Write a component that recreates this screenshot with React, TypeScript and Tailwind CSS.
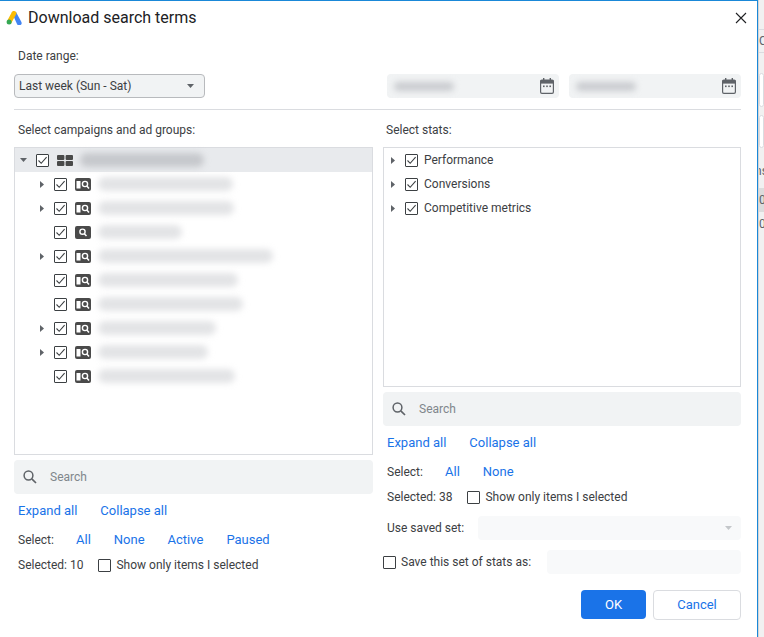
import React from "react";

const Check = ({ checked = true }: { checked?: boolean }) => (
  <span className="w-[13px] h-[13px] border border-[#3c4043] rounded-[1px] bg-white flex items-center justify-center shrink-0">
    {checked && (
      <svg width="11" height="11" viewBox="0 0 11 11" fill="none">
        <path d="M1.5 5.5 L4.2 8.3 L9.6 2.2" stroke="#3c4043" strokeWidth="1.1" />
      </svg>
    )}
  </span>
);

const Caret = ({ down = false }: { down?: boolean }) =>
  down ? (
    <svg width="7" height="4" viewBox="0 0 7 4"><path d="M0 0h7L3.5 4z" fill="#5f6368" /></svg>
  ) : (
    <svg width="4" height="7" viewBox="0 0 4 7"><path d="M0 0v7l4-3.5z" fill="#5f6368" /></svg>
  );

const CampaignIcon = () => (
  <svg width="16" height="13" viewBox="0 0 16 13">
    <rect width="16" height="13" rx="2" fill="#4a4a4a" />
    <rect x="1.5" y="3" width="4" height="7.5" fill="#fff" />
    <circle cx="10" cy="6" r="2.6" fill="none" stroke="#fff" strokeWidth="1.4" />
    <path d="M11.8 8 L14 10.4" stroke="#fff" strokeWidth="1.5" />
  </svg>
);

const SearchBadge = () => (
  <svg width="16" height="13" viewBox="0 0 16 13">
    <rect width="16" height="13" rx="2" fill="#4a4a4a" />
    <circle cx="7.5" cy="5.7" r="2.6" fill="none" stroke="#fff" strokeWidth="1.4" />
    <path d="M9.3 7.7 L11.5 10" stroke="#fff" strokeWidth="1.5" />
  </svg>
);

const Blur = ({ w, dark = false }: { w: number; dark?: boolean }) => (
  <span
    className={`h-[14px] rounded-full blur-[3px] ${dark ? "bg-[#c6c8cc]" : "bg-[#e3e4e6]"}`}
    style={{ width: w }}
  />
);

const SearchBar = () => (
  <div className="h-[34px] bg-[#f1f3f4] rounded-[4px] flex items-center pl-[8px]">
    <svg width="16" height="16" viewBox="0 0 16 16" fill="none">
      <circle cx="6.5" cy="6.5" r="4.4" stroke="#5f6368" strokeWidth="1.5" />
      <path d="M9.8 9.8 L14 14" stroke="#5f6368" strokeWidth="1.7" />
    </svg>
    <span className="ml-[12px] text-[12px] text-[#80868b]">Search</span>
  </div>
);

const CalendarIcon = () => (
  <svg width="14" height="16" viewBox="0 0 14 16">
    <rect x="0.6" y="2" width="12.8" height="13.4" rx="1.3" fill="none" stroke="#5f6368" strokeWidth="1.2" />
    <rect x="0.6" y="2" width="12.8" height="3.6" fill="#5f6368" />
    <rect x="3" y="0" width="1.4" height="3" fill="#5f6368" />
    <rect x="9.6" y="0" width="1.4" height="3" fill="#5f6368" />
    <rect x="3" y="7.5" width="1.6" height="1.6" fill="#5f6368" />
    <rect x="6.2" y="7.5" width="1.6" height="1.6" fill="#5f6368" />
    <rect x="9.4" y="7.5" width="1.6" height="1.6" fill="#5f6368" />
  </svg>
);

const DateField = ({ w, blur }: { w: number; blur: number }) => (
  <div className="h-[24px] bg-[#f1f3f4] rounded-[4px] flex items-center justify-between pl-[7px] pr-[5px]" style={{ width: w }}>
    <span className="h-[9px] rounded-full blur-[3px] bg-[#c9cbcf]" style={{ width: blur }} />
    <CalendarIcon />
  </div>
);

const rows = [
  { caret: true, icon: "c", w: 135 },
  { caret: true, icon: "c", w: 136 },
  { caret: false, icon: "s", w: 84 },
  { caret: true, icon: "c", w: 175 },
  { caret: false, icon: "c", w: 140 },
  { caret: false, icon: "c", w: 145 },
  { caret: true, icon: "c", w: 118 },
  { caret: true, icon: "c", w: 110 },
  { caret: false, icon: "c", w: 137 },
];

const Link = ({ children, className = "" }: { children: React.ReactNode; className?: string }) => (
  <span className={`text-[13px] text-[#1a73e8] ${className}`}>{children}</span>
);

const Backdrop = () => (
  <div className="w-[6px] h-full bg-[#f1f1f1] flex flex-col overflow-hidden text-[#5f6368] text-[12px] leading-[14px] border-l border-[#d5d5d5]">
    <span className="mt-[29px] h-[24px] border-y border-[#dadce0] whitespace-nowrap pt-[4px]">C</span>
    <span className="mt-[20px] h-[34px] border border-[#dadce0] rounded-[4px] bg-white" />
    <span className="mt-[8px] h-[33px] border border-[#dadce0] rounded-[4px] bg-white" />
    <span className="mt-[16px] h-[24px] whitespace-nowrap -ml-[4px]">ns</span>
    <span className="h-[24px] bg-[#dcdcdc] pt-[5px]">0</span>
    <span className="h-[24px] pt-[5px]">0</span>
  </div>
);

export default function App() {
  return (
    <div className="w-[764px] h-[637px] bg-white flex overflow-hidden font-['Roboto','Liberation_Sans',sans-serif] text-[12px] text-[#3c4043]">
      <div className="w-[758px] h-full shrink-0 border-t border-r border-[#1a88d8] bg-white flex flex-col">
        {/* Title */}
        <div className="flex items-center h-[32px] pl-[6px] pr-[8px] pt-[1px] shrink-0">
          <svg width="16" height="14" viewBox="0 0 16 14" className="shrink-0">
            <path d="M5.6 1 L10 1 L15.4 11 A2.4 2.4 0 0 1 11 13 Z" fill="#4285f4" />
            <path d="M5.8 1.2 A2.4 2.4 0 0 1 10 3.6 L5.2 12.2 L1.2 9.8 Z" fill="#fbbc04" />
            <circle cx="3.1" cy="11" r="2.5" fill="#34a853" />
          </svg>
          <span className="ml-[6px] text-[16px] text-[#202124]">Download search terms</span>
          <svg width="12" height="12" viewBox="0 0 12 12" className="ml-auto mr-[2px]">
            <path d="M1 1 L11 11 M11 1 L1 11" stroke="#202124" strokeWidth="1.1" />
          </svg>
        </div>

        {/* Date */}
        <div className="pl-[14px] pr-[16px] shrink-0">
          <div className="pl-[4px] mt-[16px] leading-[14px]">Date range:</div>
          <div className="flex items-center mt-[11px]">
            <div className="w-[191px] h-[24px] bg-[#f1f3f4] border border-[#b8babd] rounded-[4px] flex items-center justify-between pl-[4px] pr-[10px]">
              <span className="text-[12px]">Last week (Sun - Sat)</span>
              <Caret down />
            </div>
            <div className="ml-auto flex gap-[10px]">
              <DateField w={172} blur={60} />
              <DateField w={172} blur={60} />
            </div>
          </div>
          <div className="h-px bg-[#dadce0] mt-[11px]" />
        </div>

        {/* Columns */}
        <div className="flex pl-[14px] pr-[16px] flex-1">
          {/* Left */}
          <div className="w-[359px] shrink-0 flex flex-col">
            <div className="pl-[4px] mt-[13px] leading-[14px]">Select campaigns and ad groups:</div>
            <div className="mt-[10px] h-[308px] border border-[#dadce0] bg-white">
              <div className="h-[24px] bg-[#e8eaed] flex items-center pl-[5px]">
                <Caret down />
                <span className="ml-[9px] flex"><Check /></span>
                <span className="ml-[8px] flex">
                  <svg width="16" height="11" viewBox="0 0 16 11" fill="#4a4a4a">
                    <rect width="7.4" height="5" rx="1" />
                    <rect x="8.6" width="7.4" height="5" rx="1" />
                    <rect y="6" width="7.4" height="5" rx="1" />
                    <rect x="8.6" y="6" width="7.4" height="5" rx="1" />
                  </svg>
                </span>
                <span className="ml-[7px] flex"><Blur w={124} dark /></span>
              </div>
              {rows.map((r, i) => (
                <div key={i} className="h-[24px] flex items-center pl-[25px]">
                  <span className="w-[4px] flex">{r.caret && <Caret />}</span>
                  <span className="ml-[10px] flex"><Check /></span>
                  <span className="ml-[8px] flex">{r.icon === "c" ? <CampaignIcon /> : <SearchBadge />}</span>
                  <span className="ml-[7px] flex"><Blur w={r.w} /></span>
                </div>
              ))}
            </div>
            <div className="mt-[5px]"><SearchBar /></div>
            <div className="flex pl-[4px] mt-[9px] gap-[23px] leading-[16px]">
              <Link>Expand all</Link>
              <Link>Collapse all</Link>
            </div>
            <div className="flex items-center pl-[4px] mt-[13px] h-[16px]">
              <span className="w-[58px]">Select:</span>
              <div className="flex gap-[23px]">
                <Link>All</Link>
                <Link>None</Link>
                <Link>Active</Link>
                <Link>Paused</Link>
              </div>
            </div>
            <div className="flex items-center pl-[4px] mt-[9px] h-[16px]">
              <span>Selected: 10</span>
              <span className="ml-[15px] flex"><Check checked={false} /></span>
              <span className="ml-[5px]">Show only items I selected</span>
            </div>
          </div>

          {/* Right */}
          <div className="flex-1 ml-[10px] flex flex-col">
            <div className="pl-[3px] mt-[13px] leading-[14px]">Select stats:</div>
            <div className="mt-[10px] h-[240px] border border-[#dadce0] bg-white pt-0">
              {["Performance", "Conversions", "Competitive metrics"].map((t) => (
                <div key={t} className="h-[24px] flex items-center pl-[7px]">
                  <span className="w-[4px] flex"><Caret /></span>
                  <span className="ml-[10px] flex"><Check /></span>
                  <span className="ml-[6px] text-[#3c4043]">{t}</span>
                </div>
              ))}
            </div>
            <div className="mt-[5px]"><SearchBar /></div>
            <div className="flex pl-[4px] mt-[9px] gap-[23px] leading-[16px]">
              <Link>Expand all</Link>
              <Link>Collapse all</Link>
            </div>
            <div className="flex items-center pl-[4px] mt-[13px] h-[16px]">
              <span className="w-[58px]">Select:</span>
              <div className="flex gap-[23px]">
                <Link>All</Link>
                <Link>None</Link>
              </div>
            </div>
            <div className="flex items-center pl-[4px] mt-[9px] h-[16px]">
              <span>Selected: 38</span>
              <span className="ml-[15px] flex"><Check checked={false} /></span>
              <span className="ml-[5px]">Show only items I selected</span>
            </div>
            <div className="flex items-center pl-[4px] mt-[11px] h-[24px]">
              <span className="w-[91px]">Use saved set:</span>
              <div className="flex-1 h-[24px] bg-[#f8f9fa] rounded-[4px] flex items-center justify-end pr-[9px]">
                <svg width="7" height="4" viewBox="0 0 7 4"><path d="M0 0h7L3.5 4z" fill="#c4c7ca" /></svg>
              </div>
            </div>
            <div className="flex items-center mt-[10px] h-[24px]">
              <Check checked={false} />
              <span className="ml-[5px] w-[146px]">Save this set of stats as:</span>
              <div className="flex-1 h-[24px] bg-[#f8f9fa] rounded-[4px]" />
            </div>
            <div className="flex justify-end gap-[7px] mt-[16px]">
              <button className="w-[65px] h-[29px] bg-[#1a73e8] rounded-[4px] text-white text-[13px]">OK</button>
              <button className="w-[88px] h-[30px] bg-white border border-[#dadce0] rounded-[4px] text-[#1a73e8] text-[13px]">Cancel</button>
            </div>
          </div>
        </div>
      </div>
      <Backdrop />
    </div>
  );
}
